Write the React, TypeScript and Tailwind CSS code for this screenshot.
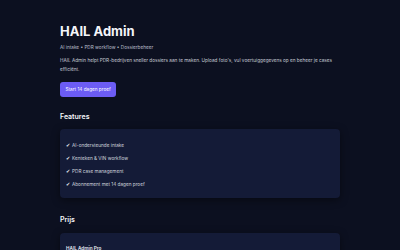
const features = [
  'AI-ondersteunde intake',
  'Kenteken & VIN workflow',
  'PDR case management',
  'Abonnement met 14 dagen proef',
];

export default function App() {
  return (
    <div className="min-h-screen bg-[#0c1020] font-['Inter',sans-serif]">
      <main className="mx-auto w-[280px] pt-[23px] pb-10">
        <h1 className="text-[13px] leading-[16px] font-bold text-[#f5f6fa]">HAIL Admin</h1>
        <p className="mt-[5px] text-[4.7px] leading-[7px] text-[#b9beca]">
          AI intake • PDR workflow • Dossierbeheer
        </p>
        <p className="mt-[5px] text-[4.7px] leading-[8.5px] text-[#c6cad4]">
          HAIL Admin helpt PDR-bedrijven sneller dossiers aan te maken. Upload foto's, vul voertuiggegevens op en beheer je cases efficiënt.
        </p>
        <button className="mt-[9px] h-[15px] rounded-[3px] bg-[#6c5cf4] px-[5.5px] text-[4.7px] text-white">
          Start 14 dagen proef
        </button>

        <h2 className="mt-[15px] text-[7px] leading-[10px] font-semibold text-[#f5f6fa]">Features</h2>
        <div className="mt-[7px] rounded-[4px] bg-[#141b37] px-[6px] pt-[12px] pb-[10px] shadow-[0_2px_8px_rgba(0,0,0,0.45)]">
          <ul className="flex flex-col gap-[5px]">
            {features.map((f) => (
              <li key={f} className="flex items-center gap-[2px] text-[4.7px] leading-[8px] text-[#cfd3dd]">
                <span className="text-[#e8eaf0]">✔</span>
                <span>{f}</span>
              </li>
            ))}
          </ul>
        </div>

        <h2 className="mt-[17px] text-[7px] leading-[10px] font-semibold text-[#f5f6fa]">Prijs</h2>
        <div className="mt-[8px] rounded-[4px] bg-[#141b37] px-[6px] pt-[11px] pb-[12px] shadow-[0_2px_8px_rgba(0,0,0,0.45)]">
          <div className="text-[4.7px] leading-[8px] font-semibold text-[#e8eaf0]">HAIL Admin Pro</div>
          <div className="mt-[4px] text-[4.7px] leading-[8px] text-[#c6cad4]">€ 49 per maand</div>
        </div>
      </main>
    </div>
  );
}
